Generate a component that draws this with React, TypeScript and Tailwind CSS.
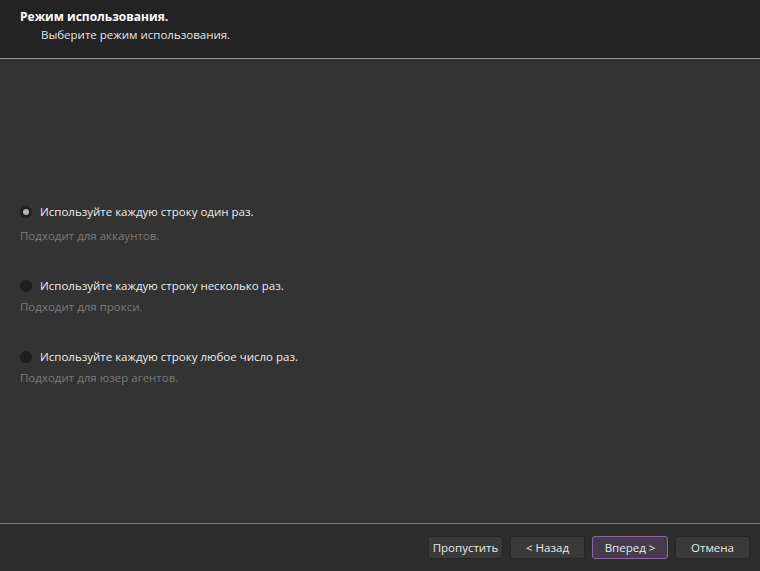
const options = [
  { label: "Используйте каждую строку один раз.", hint: "Подходит для аккаунтов.", checked: true },
  { label: "Используйте каждую строку несколько раз.", hint: "Подходит для прокси.", checked: false },
  { label: "Используйте каждую строку любое число раз.", hint: "Подходит для юзер агентов.", checked: false },
];

function Radio({ checked }: { checked: boolean }) {
  return (
    <span className="flex h-[12px] w-[12px] items-center justify-center rounded-full bg-[#1f1f1f]">
      {checked && <span className="h-[6px] w-[6px] rounded-full bg-[#b4b4b4]" />}
    </span>
  );
}

export default function App() {
  return (
    <div className="flex h-[571px] w-[760px] flex-col bg-[#333333] text-[11.5px] leading-[15px] font-['Open_Sans',sans-serif]">
      <div className="h-[58px] bg-[#232323] pl-[20px] pt-[9px]">
        <div className="text-[12px] font-bold text-white">Режим использования.</div>
        <div className="mt-[3px] pl-[21px] text-[#e4e4e4]">Выберите режим использования.</div>
      </div>
      <div className="h-px bg-[#9a9a9a]" />
      <div className="flex flex-1 flex-col pl-[20px] pt-[145px]">
        {options.map((o, i) => (
          <div key={i} className="mb-[35px]">
            <label className="flex items-center gap-[8px] text-[#ececec]">
              <Radio checked={o.checked} />
              {o.label}
            </label>
            <div className={o.checked ? "mt-[9px] text-[#7a7a7a]" : "mt-[6px] text-[#7a7a7a]"}>{o.hint}</div>
          </div>
        ))}
      </div>
      <div className="h-px bg-[#7a7a7a]" />
      <div className="flex h-[47px] items-center justify-end gap-[7px] bg-[#2d2d2d] pr-[10px] text-[#e8e8e8]">
        <button className="h-[23px] w-[75px] rounded-[3px] border border-[#262626] bg-[#3a3a3a]">Пропустить</button>
        <button className="h-[23px] w-[75px] rounded-[3px] border border-[#262626] bg-[#3a3a3a]">&lt; Назад</button>
        <button className="h-[23px] w-[76px] rounded-[3px] border border-[#8c64a8] bg-[#443c4a]">Вперед &gt;</button>
        <button className="h-[23px] w-[75px] rounded-[3px] border border-[#262626] bg-[#3a3a3a]">Отмена</button>
      </div>
    </div>
  );
}
